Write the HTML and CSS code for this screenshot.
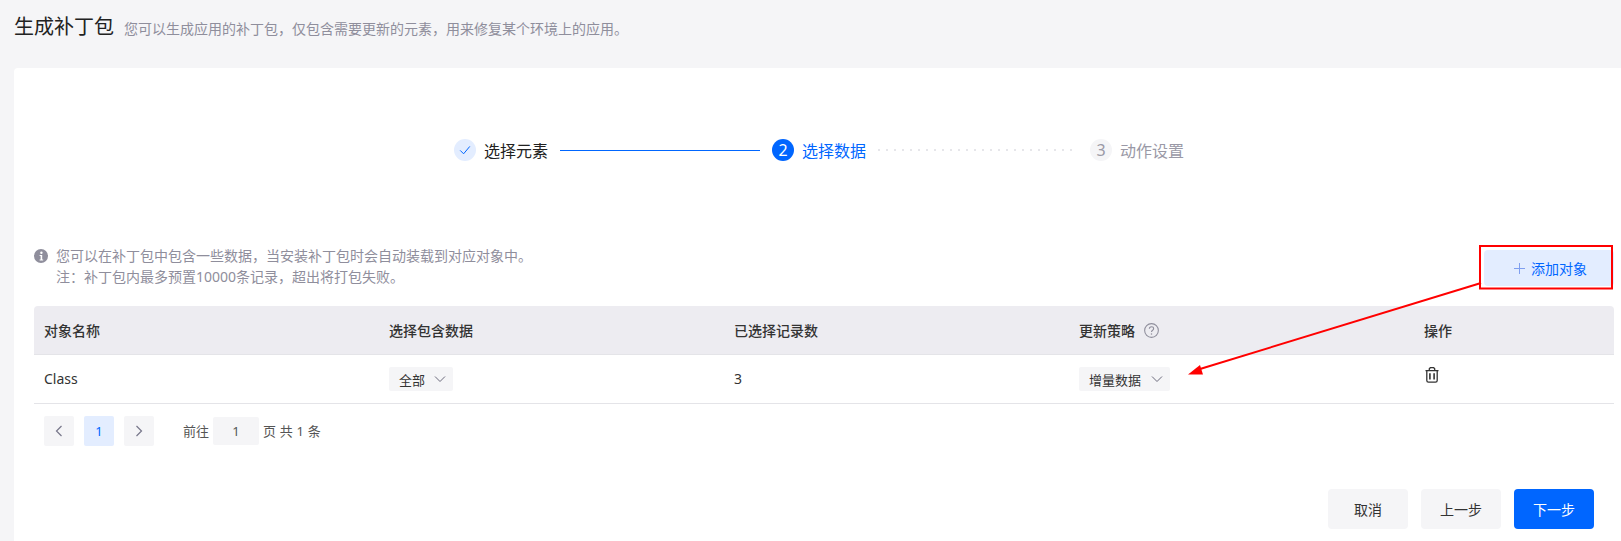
FILE: index.html
```html
<!DOCTYPE html>
<html lang="zh-CN">
<head>
<meta charset="utf-8">
<title>生成补丁包</title>
<link rel="stylesheet" href="styles.css">
</head>
<body>
<div class="page">
  <header class="head">
    <h1 class="title">生成补丁包</h1>
    <span class="sub">您可以生成应用的补丁包，仅包含需要更新的元素，用来修复某个环境上的应用。</span>
  </header>
  <main class="card">
    <div class="steps">
      <div class="step done">
        <span class="dot"><svg width="14" height="14" viewBox="0 0 14 14"><path d="M2.2 7.4 5.6 10.8 11.8 3.4" fill="none" stroke="#0066ff" stroke-width="1"/></svg></span>
        <span class="label">选择元素</span>
      </div>
      <span class="link solid"></span>
      <div class="step active">
        <span class="dot">2</span>
        <span class="label">选择数据</span>
      </div>
      <span class="link dotted"></span>
      <div class="step todo">
        <span class="dot">3</span>
        <span class="label">动作设置</span>
      </div>
    </div>
    <div class="tools">
      <div class="note">
        <svg class="info" width="14" height="14" viewBox="0 0 14 14"><circle cx="7" cy="7" r="7" fill="#8f8e9c"/><circle cx="7.4" cy="3.8" r="1.2" fill="#fff"/><path d="M5.6 6h2.6v4.4h1v1H5.6v-1h1V7h-1z" fill="#fff"/></svg>
        <p class="note-text">您可以在补丁包中包含一些数据，当安装补丁包时会自动装载到对应对象中。<br>注：补丁包内最多预置10000条记录，超出将打包失败。</p>
      </div>
      <button class="add"><svg class="plus" width="11" height="11" viewBox="0 0 11 11"><path d="M5.5 0v11M0 5.5h11" fill="none" stroke="#7f9ff0"/></svg>添加对象</button>
    </div>
    <div class="table">
      <div class="row hrow">
        <div class="cell">对象名称</div>
        <div class="cell">选择包含数据</div>
        <div class="cell">已选择记录数</div>
        <div class="cell">更新策略
          <svg class="help" width="15" height="15" viewBox="0 0 14 14"><circle cx="7" cy="7" r="6.4" fill="none" stroke="#8f8e9c"/><path d="M5 5.4C5 4.2 5.9 3.5 7 3.5s2 .7 2 1.8c0 1.5-2 1.5-2 3.1" fill="none" stroke="#8f8e9c"/><circle cx="7" cy="10.2" r=".7" fill="#8f8e9c"/></svg>
        </div>
        <div class="cell">操作</div>
      </div>
      <div class="row drow">
        <div class="cell cname">Class</div>
        <div class="cell"><span class="select">全部<svg class="chev" width="12" height="12" viewBox="0 0 12 12"><path d="M1 3.5 6 8.5 11 3.5" fill="none" stroke="#6b6a7c"/></svg></span></div>
        <div class="cell cname">3</div>
        <div class="cell"><span class="select wide">增量数据<svg class="chev" width="12" height="12" viewBox="0 0 12 12"><path d="M1 3.5 6 8.5 11 3.5" fill="none" stroke="#6b6a7c"/></svg></span></div>
        <div class="cell"><svg class="trash" width="14" height="16" viewBox="0 0 14 16"><path d="M.5 3.6h13M4.3 3.4V1.7l1-1h3.4l1 1v1.7M1.8 3.8v9.6c0 1 .7 1.8 1.7 1.8h7c1 0 1.7-.8 1.7-1.8V3.8" fill="none" stroke="#333" stroke-width="1.3"/><path d="M4.9 6.2v6.2M9.1 6.2v6.2" fill="none" stroke="#333" stroke-width="1.6"/></svg></div>
      </div>
    </div>
    <nav class="pager">
      <button class="pg"><svg width="10" height="12" viewBox="0 0 10 12"><path d="M7.5 1 2.5 6l5 5" fill="none" stroke="#77768a" stroke-width="1.2"/></svg></button>
      <button class="pg on">1</button>
      <button class="pg"><svg width="10" height="12" viewBox="0 0 10 12"><path d="M2.5 1l5 5-5 5" fill="none" stroke="#77768a" stroke-width="1.2"/></svg></button>
      <span class="goto">前往</span>
      <span class="pinput">1</span>
      <span class="total">页 共 1 条</span>
    </nav>
    <footer class="actions">
      <button class="btn">取消</button>
      <button class="btn">上一步</button>
      <button class="btn primary">下一步</button>
    </footer>
  </main>
  <svg class="annot" width="1621" height="541" viewBox="0 0 1621 541">
    <rect x="1480" y="246" width="132" height="42.5" fill="none" stroke="#f00" stroke-width="2"/>
    <path d="M1481 283 1200 369" fill="none" stroke="#f00" stroke-width="2"/>
    <path d="M1188 374.5 1200 365 1203 374.5z" fill="#f00"/>
  </svg>
</div>
</body>
</html>
```
FILE: styles.css
```css
* { box-sizing: border-box; }
html, body { margin: 0; height: 100%; overflow: hidden; }
body {
  background: #f5f5f7;
  color: #333;
  font-family: "Noto Sans", "Noto Sans CJK SC", sans-serif;
  font-size: 14px;
}
.page { position: relative; height: 541px; padding: 0 0 0 14px; overflow: hidden; }
.head { display: flex; align-items: center; height: 68px; padding-bottom: 15px; }
.title { margin: 0 10px 0 0; font-size: 20px; font-weight: 400; color: #222; line-height: 28px; }
.sub { font-size: 14px; color: #8f8e9c; padding-top: 3px; }
.card {
  background: #fff;
  border-radius: 4px 0 0 0;
  height: 473px;
  padding: 47px 7px 0 20px;
}
.steps { display: flex; align-items: center; height: 70px; padding-left: 420px; }
.step { display: flex; align-items: center; gap: 8px; font-size: 16px; }
.dot {
  width: 22px; height: 22px; border-radius: 50%;
  display: flex; align-items: center; justify-content: center;
  font-size: 16px;
}
.done .dot { background: #e3edff; }
.done .label { color: #222; }
.active .dot { background: #0066ff; color: #fff; }
.active .label { color: #0066ff; }
.todo .dot { background: #f5f5f7; color: #9a99a6; }
.todo .label { color: #9a99a6; }
.link { display: block; width: 200px; margin: 0 12px; }
.solid { border-top: 1px solid #0066ff; }
.dotted {
  width: 196px; margin-right: 16px; height: 2px;
  background: repeating-linear-gradient(90deg, #e6e6ea 0 2px, transparent 2px 8px);
}
.tools { display: flex; justify-content: space-between; margin-top: 58px; height: 63px; align-items: flex-start; }
.note { display: flex; padding-top: 3px; }
.info { margin: 3px 8px 0 0; flex: none; }
.note-text { margin: 0; font-size: 14px; line-height: 20.5px; color: #8f8e9c; }
.add {
  width: 130px; height: 36px; margin-top: 7px; padding: 0 0 0 3px;
  border: 0; border-radius: 4px;
  background: #e3edff; color: #0066ff;
  font: inherit; font-size: 14px;
  display: flex; align-items: center; justify-content: center;
}
.plus { margin-right: 6px; }
.table { width: 1580px; }
.row { display: grid; grid-template-columns: 345px 345px 345px 345px 200px; align-items: center; }
.cell { padding-left: 10px; display: flex; align-items: center; }
.cname { margin-top: -2px; }
.hrow { height: 49px; background: #edecf1; border-radius: 4px 4px 0 0; font-weight: 500; color: #333; border-bottom: 1px solid #e4e4e8; }
.help { margin-left: 9px; }
.drow { height: 49px; border-bottom: 1px solid #e4e4e8; }
.select {
  display: inline-flex; align-items: center;
  height: 24px; padding: 0 7px 0 10px;
  background: #f5f5f7; border-radius: 2px;
  font-size: 13px;
}
.chev { margin-left: 9px; }
.select.wide .chev { margin-left: 10px; }
.select.wide { padding-right: 7px; }
.trash { margin: -8px 0 0 1px; }
.pager { display: flex; align-items: center; padding: 12px 0 0 10px; height: 41px; color: #555; font-size: 13px; }
.pg {
  width: 30px; height: 30px; margin-right: 10px;
  border: 0; border-radius: 2px; background: #f5f5f7; color: #0066ff;
  font: inherit; font-size: 13px; display: flex; align-items: center; justify-content: center; padding: 0;
}
.pg.on { background: #e3edff; }
.goto { margin-left: 19px; }
.pinput { width: 46px; height: 28px; margin: 0 4px; background: #f5f5f7; border-radius: 2px; display: flex; align-items: center; justify-content: center; }
.total { letter-spacing: .2px; }
.actions { display: flex; justify-content: flex-end; gap: 13px; margin-top: 44px; padding-right: 20px; }
.btn {
  width: 80px; height: 40px; border: 0; border-radius: 4px;
  background: #f5f5f7; color: #333; font: inherit; font-size: 14px;
}
.btn.primary { background: #0066ff; color: #fff; }
.annot { position: absolute; left: 0; top: 0; pointer-events: none; }
```
